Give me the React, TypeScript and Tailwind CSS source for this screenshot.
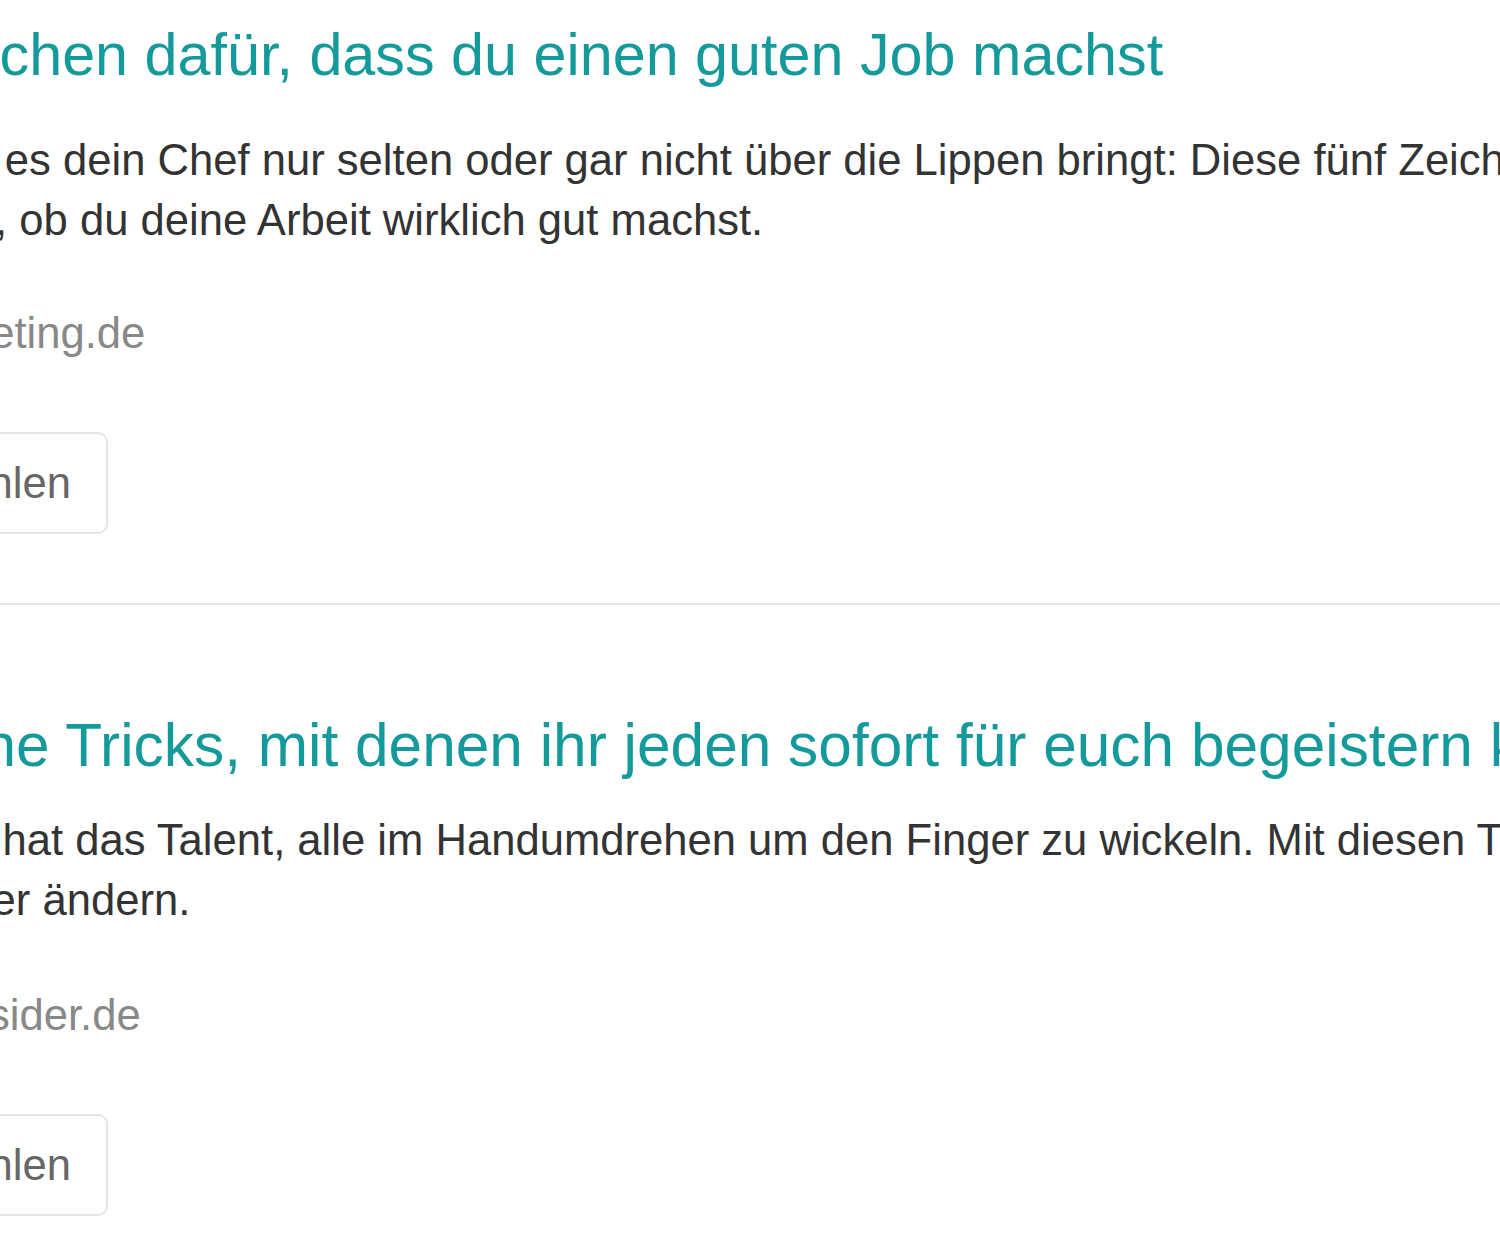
import React from "react";

interface Article {
  title: string;
  lines: string[];
  source: string;
  // spacing differs a little between the two entries
  titleClass: string;
  lineClasses: string[];
  bodyClass: string;
  sourceClass: string;
  buttonClass: string;
}

const articles: Article[] = [
  {
    title: "Fünf Zeichen dafür, dass du einen guten Job machst",
    lines: [
      "Auch wenn es dein Chef nur selten oder gar nicht über die Lippen bringt: Diese fünf Zeichen",
      "verraten dir, ob du deine Arbeit wirklich gut machst.",
    ],
    source: "onlinemarketing.de",
    titleClass: "pt-[22px] ml-[2px] text-[59.3px]",
    lineClasses: ["ml-[-3px]", "ml-[-3px]"],
    bodyClass: "mt-[42px]",
    sourceClass: "mt-[53px] ml-[-3px]",
    buttonClass: "mt-[69px]",
  },
  {
    title: "5 einfache Tricks, mit denen ihr jeden sofort für euch begeistern könnt",
    lines: [
      "Nicht jeder hat das Talent, alle im Handumdrehen um den Finger zu wickeln. Mit diesen Tricks kann",
      "sich das aber ändern.",
    ],
    source: "businessinsider.de",
    titleClass: "mt-[107px] ml-[-9px] text-[60.4px]",
    lineClasses: ["ml-[2px]", "ml-[-9px]"],
    bodyClass: "mt-[32px]",
    sourceClass: "mt-[55px] ml-[2px]",
    buttonClass: "mt-[69px]",
  },
];

const ArticleItem: React.FC<{ article: Article }> = ({ article }) => {
  return (
    <div>
      <h2
        className={`whitespace-nowrap font-normal leading-[66px] text-[#159a9c] ${article.titleClass}`}
      >
        {article.title}
      </h2>
      <div className={`text-[43.6px] leading-[60px] text-[#333] ${article.bodyClass}`}>
        {article.lines.map((line, i) => (
          <p key={i} className={`whitespace-nowrap ${article.lineClasses[i]}`}>
            {line}
          </p>
        ))}
      </div>
      <div
        className={`whitespace-nowrap text-[43.6px] leading-[60px] text-[#888] ${article.sourceClass}`}
      >
        {article.source}
      </div>
      <button
        className={`flex h-[102px] w-[328px] items-center justify-end rounded-[10px] border-2 border-[#e6e6e6] bg-white pr-[35px] text-[43.6px] leading-[60px] text-[#666] ${article.buttonClass}`}
      >
        Empfehlen
      </button>
    </div>
  );
};

const App: React.FC = () => {
  return (
    <div className="h-[1250px] w-full overflow-hidden bg-white font-['Liberation_Sans',Arial,sans-serif]">
      <div className="ml-[-220px]">
        <ArticleItem article={articles[0]} />
        <div className="mt-[69px] h-[2px] bg-[#e5e5e5]" />
        <ArticleItem article={articles[1]} />
      </div>
    </div>
  );
};

export default App;
